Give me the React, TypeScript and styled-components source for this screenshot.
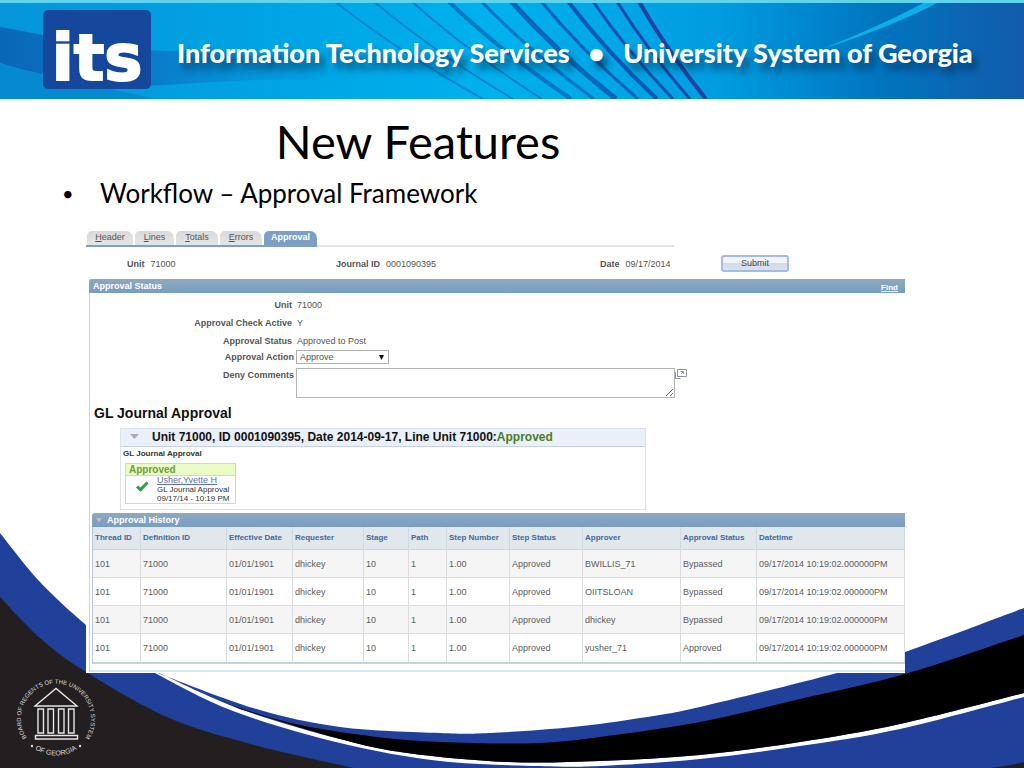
import React from "react";
import styled, { createGlobalStyle } from "styled-components";

const GlobalStyle = createGlobalStyle`
  *, *::before, *::after { box-sizing: border-box; }
  body { margin: 0; background: #fff; }
`;

const sans = `"Liberation Sans", Arial, sans-serif`;
const display = `Lato, Calibri, sans-serif`;

type Point = [number, number];

/* Smooth curve through a list of points. */
const curve = (points: Point[], command = "M") => {
  let d = `${command}${points[0][0]} ${points[0][1]}`;
  for (let i = 0; i < points.length - 1; i++) {
    const a = points[i - 1] ?? points[i];
    const b = points[i];
    const c = points[i + 1];
    const e = points[i + 2] ?? c;
    d += ` C${b[0] + (c[0] - a[0]) / 6} ${b[1] + (c[1] - a[1]) / 6} ${c[0] - (e[0] - b[0]) / 6} ${c[1] - (e[1] - b[1]) / 6} ${c[0]} ${c[1]}`;
  }
  return d;
};

/* ---------- Slide ---------- */

const Slide = styled.div`
  display: grid;
  grid-template-columns: minmax(0, 1fr);
  min-height: 100vh;
  overflow: hidden;
  background: #fff;
`;

const Waves = styled.svg`
  grid-area: 1 / 1;
  align-self: end;
  display: block;
  width: 100%;
  height: 240px;
`;

const Seal = styled.svg`
  grid-area: 1 / 1;
  align-self: end;
  display: block;
  width: 84px;
  height: 84px;
  margin: 0 0 8px 14px;
`;

const Content = styled.main`
  grid-area: 1 / 1;
  align-self: start;
`;

/* ---------- Banner ---------- */

const Banner = styled.header`
  display: grid;
  grid-template-columns: minmax(0, 1fr);
  height: 99px;
`;

const BannerArt = styled.svg`
  grid-area: 1 / 1;
  display: block;
  width: 100%;
  height: 99px;
`;

const BannerRow = styled.div`
  grid-area: 1 / 1;
  z-index: 1;
  display: flex;
  align-items: center;
  gap: 26px;
  height: 99px;
  padding-left: 43px;
`;

const Logo = styled.svg`
  flex: none;
  width: 108px;
  height: 79px;
`;

const BannerText = styled.p`
  display: flex;
  gap: 19px;
  margin: 0;
  padding-top: 6px;
  color: #fff;
  font: 900 27px/32px ${display};
  white-space: nowrap;
  text-shadow: 5px 7px 7px rgba(0, 50, 90, 0.75);
`;

/* ---------- Headings ---------- */

const Title = styled.h1`
  margin: 14px 188px 0 0;
  color: #000;
  font: 400 47px/56px ${display};
  text-align: center;
`;

const Bullets = styled.ul`
  margin: 8px 0 0;
  padding: 0 0 0 62px;
  list-style: none;
`;

const Bullet = styled.li`
  display: flex;
  color: #000;
  font: 400 26px/32px ${display};

  &::before {
    content: "•";
    width: 38px;
    font-size: 20px;
  }
`;

/* ---------- Application capture ---------- */

const Capture = styled.section`
  margin: 18px 119px 0 86px;
  padding: 4px 0 1px;
  background: #fff;
  color: #555;
  font: 9px/12px ${sans};
`;

const Tabs = styled.nav`
  display: flex;
  width: 588px;
  height: 16px;
  border-bottom: 2px solid #dfe4f4;
`;

const TabGroup = styled.div`
  display: flex;
  gap: 2px;
  height: 16px;
  padding-left: 1px;
  border-bottom: 2px solid #7ba0c4;
`;

const Tab = styled.a<{ $active?: boolean; $width: number }>`
  width: ${(p) => p.$width}px;
  height: 14px;
  border-radius: 5px 7px 0 0;
  background: ${(p) => (p.$active ? "#7ba0c4" : "linear-gradient(#d9d9d9, #e6e6e6)")};
  color: ${(p) => (p.$active ? "#fff" : "#555")};
  font-weight: ${(p) => (p.$active ? 700 : 400)};
  line-height: 13px;
  text-align: center;
  text-decoration: none;
`;

const KeyFields = styled.div`
  display: grid;
  grid-template-columns: 209px 264px 121px auto;
  align-items: center;
  justify-content: start;
  height: 32px;
  padding-left: 41px;
`;

const Field = styled.span`
  display: flex;
  gap: 6px;
  padding-top: 2px;
`;

const SubmitButton = styled.button`
  width: 68px;
  height: 17px;
  padding: 0 0 1px;
  border: 2px solid #a3bbe8;
  border-radius: 3px;
  background: linear-gradient(#f3f5fa 45%, #d3dae8 50%, #dce2ee);
  color: #444;
  font: 9px/12px ${sans};
`;

const Panel = styled.div`
  margin-left: 3px;
  border-left: 1px solid #c5d3e2;
  border-bottom: 2px solid #dae5ef;
  padding-bottom: 6px;
`;

const Bar = styled.div<{ $inset?: boolean }>`
  display: flex;
  align-items: center;
  justify-content: space-between;
  height: 14px;
  margin-left: ${(p) => (p.$inset ? 0 : -1)}px;
  padding: 0 7px 0 4px;
  border-radius: 3px 0 0 0;
  background: linear-gradient(#8ea9bd, #789dc4);
  color: #fff;
`;

const BarTitle = styled.h2`
  display: flex;
  align-items: center;
  gap: 5px;
  margin: 0;
  font: 700 9px/12px ${sans};
`;

const FindLink = styled.a`
  padding-top: 4px;
  color: #fff;
  font: 700 8px/10px ${sans};
`;

const Form = styled.form`
  display: grid;
  grid-template-columns: 204px 1fr;
  grid-template-rows: 18px 18px 16px 18px 32px;
  column-gap: 2px;
  padding-top: 3px;
`;

const Label = styled.label`
  font-weight: 700;
  line-height: 18px;
  text-align: right;
`;

const ReadLabel = styled.span`
  padding-right: 2px;
  font-weight: 700;
  line-height: 18px;
  text-align: right;
`;

const ReadValue = styled.output`
  padding-left: 1px;
  line-height: 18px;
`;

const SelectBox = styled.div`
  display: grid;
  align-self: center;
  width: 93px;
`;

const Select = styled.select`
  grid-area: 1 / 1;
  width: 100%;
  height: 14px;
  padding: 0 3px;
  border: 1px solid #b0b0b0;
  border-radius: 0;
  appearance: none;
  background: #fff;
  color: #555;
  font: 9px/12px ${sans};
`;

const SelectArrow = styled.svg`
  grid-area: 1 / 1;
  place-self: center end;
  width: 5px;
  height: 5px;
  margin-right: 5px;
  pointer-events: none;
`;

const CommentRow = styled.div`
  display: flex;
  align-items: flex-start;
  padding-top: 2px;
`;

const Comments = styled.textarea`
  display: block;
  width: 379px;
  height: 30px;
  border: 1px solid #b4b4b4;
  resize: both;
  background: #fff;
  font: 9px/12px ${sans};
`;

const IconButton = styled.button`
  display: flex;
  padding: 1px 0 0;
  border: 0;
  background: none;
`;

const SectionTitle = styled.h2`
  margin: 6px 0 6px 4px;
  color: #111;
  font: 700 14px/18px ${sans};
`;

const Flow = styled.section`
  width: 526px;
  height: 82px;
  margin: 0 0 3px 30px;
  border: 1px solid #dbe2ec;
`;

const FlowHeader = styled.h3`
  display: flex;
  align-items: center;
  height: 18px;
  margin: 0;
  padding: 0 0 2px 9px;
  border-bottom: 1px solid #c5d1e2;
  background: #eaf0f8;
  color: #111;
  font: 700 12px/16px ${sans};
  white-space: nowrap;

  svg {
    margin-right: 13px;
  }
`;

const Green = styled.span`
  color: #4b7a26;
`;

const FlowLabel = styled.p`
  margin: 1px 0 3px 2px;
  color: #333;
  font: 700 8px/12px ${sans};
`;

const Card = styled.article`
  width: 111px;
  height: 41px;
  margin-left: 4px;
  border: 1px solid #cbe39a;
`;

const CardTitle = styled.h4`
  margin: 0;
  padding-left: 3px;
  border-bottom: 1px solid #cbe39a;
  background: #e9fcc5;
  color: #6f9c3a;
  font: 700 10px/11px ${sans};
`;

const CardBody = styled.div`
  display: grid;
  grid-template-columns: 31px 1fr;
  color: #333;
  font: 8px/9px ${sans};
  white-space: nowrap;

  svg {
    margin: 5px 0 0 9px;
  }
`;

const CardLines = styled.div`
  display: flex;
  flex-direction: column;
`;

const UserLink = styled.a`
  color: #5b72a8;
  font-size: 9px;
`;

const History = styled.section`
  margin-left: 2px;
`;

const Table = styled.table`
  width: 100%;
  border-collapse: separate;
  border-spacing: 0;
  border-left: 1px solid #b5c7d8;
  border-bottom: 2px solid #c3d3e3;
  table-layout: fixed;

  tbody tr:nth-child(odd) {
    background: #f5f5f5;
  }
`;

const Th = styled.th`
  height: 23px;
  padding: 0 0 0 2px;
  border-right: 1px solid #d0d9e0;
  border-bottom: 1px solid #c9d4dc;
  background: #e1e8ec;
  color: #41679c;
  font: 700 8px/12px ${sans};
  text-align: left;
  white-space: nowrap;
`;

const Td = styled.td`
  height: 28px;
  padding: 0 0 0 2px;
  border-right: 1px solid #dcdcdc;
  border-bottom: 1px solid #dcdcdc;
  color: #5c5c5c;
  font: 9px/12px ${sans};
  white-space: nowrap;

  tr:last-child > & {
    border-bottom: 0;
  }
`;

/* ---------- Data ---------- */

const tabs = [
  { name: "Header", width: 46 },
  { name: "Lines", width: 39 },
  { name: "Totals", width: 42 },
  { name: "Errors", width: 42 },
];

const columns = [
  { name: "Thread ID", width: 48 },
  { name: "Definition ID", width: 86 },
  { name: "Effective Date", width: 66 },
  { name: "Requester", width: 71 },
  { name: "Stage", width: 45 },
  { name: "Path", width: 38 },
  { name: "Step Number", width: 63 },
  { name: "Step Status", width: 73 },
  { name: "Approver", width: 98 },
  { name: "Approval Status", width: 76 },
  { name: "Datetime" },
];

const history = [
  ["BWILLIS_71", "Bypassed"],
  ["OIITSLOAN", "Bypassed"],
  ["dhickey", "Bypassed"],
  ["yusher_71", "Approved"],
].map(([approver, status]) => [
  "101", "71000", "01/01/1901", "dhickey", "10", "1", "1.00", "Approved",
  approver, status, "09/17/2014 10:19:02.000000PM",
]);

const rays: { from: number; to: number; width: number; color: string }[] = [
  { from: 333, to: 483, width: 2, color: "#0086c8" },
  { from: 372, to: 513, width: 2, color: "#0086c8" },
  { from: 410, to: 542, width: 2, color: "#0080c6" },
  { from: 447, to: 571, width: 4, color: "#0078c2" },
  { from: 480, to: 594, width: 3, color: "#0074c2" },
  { from: 510, to: 616, width: 5, color: "#0a66b8" },
  { from: 540, to: 638, width: 3, color: "#0a62b8" },
  { from: 567, to: 657, width: 4, color: "#1058b2" },
  { from: 592, to: 673, width: 3, color: "#1450ac" },
  { from: 616, to: 690, width: 3, color: "#1c48a6" },
  { from: 638, to: 706, width: 4, color: "#2440a0" },
];

/* ---------- Wave outlines ---------- */

const leftOuter: Point[] = [[0, 533], [40, 582], [86, 625], [120, 651], [155, 673], [233, 711], [340, 743], [440, 761], [540, 766], [600, 766], [700, 759], [800, 746], [900, 729], [1024, 697]];
const leftInner: Point[] = [[0, 597], [40, 638], [86, 672], [167, 717], [247, 743], [340, 765], [360, 769]];
const topBlue: Point[] = [[155, 672], [253, 708], [340, 727], [440, 733], [490, 733], [573, 727], [640, 718], [700, 707], [837, 673], [905, 652], [1024, 608]];
const topBlack: Point[] = [[215, 698], [240, 708], [287, 722], [340, 732], [407, 740], [473, 743], [540, 743], [600, 737], [700, 722], [800, 699], [905, 674], [1024, 635]];
const whiteTop: Point[] = [[159, 673], [240, 709], [340, 739], [407, 753], [507, 762], [600, 761], [700, 755], [800, 742], [900, 724], [1024, 693]];
const whiteTopBack = [...whiteTop].reverse();

function BannerArtwork() {
  return (
    <BannerArt viewBox="0 0 1024 99" preserveAspectRatio="none" aria-hidden="true">
      <defs>
        <linearGradient id="sky">
          <stop offset="0" stopColor="#0595d9" />
          <stop offset="0.3" stopColor="#00a6e6" />
          <stop offset="0.48" stopColor="#00b1ee" />
          <stop offset="0.7" stopColor="#009de0" />
          <stop offset="0.86" stopColor="#0075bf" />
          <stop offset="1" stopColor="#135bab" />
        </linearGradient>
        <linearGradient id="swell">
          <stop offset="0" stopColor="#0a67b8" />
          <stop offset="0.4" stopColor="#0a78c6" />
          <stop offset="1" stopColor="#0a8fd2" stopOpacity="0" />
        </linearGradient>
      </defs>
      <path d="M0 0H1024V99H0Z" fill="url(#sky)" />
      <path d="M0 27C60 38 130 52 180 51C250 51 310 62 350 82C280 75 200 84 140 86C90 86 40 75 0 63Z" fill="url(#swell)" />
      <path d="M0 64C50 76 100 86 155 99H0Z" fill="#0789d0" />
      {rays.map((r) => (
        <path
          key={r.from}
          d={`M${r.from} 0Q${r.from + (r.to - r.from) * 0.44} 52 ${r.to} 99`}
          fill="none"
          stroke={r.color}
          strokeWidth={r.width}
        />
      ))}
      <path d="M822 49Q885 24 929 0H943Q890 28 822 49Z" fill="#0cb0e8" />
      <path d="M0 0H1024V3H0Z" fill="#5fd3ee" />
    </BannerArt>
  );
}

function WaveArtwork() {
  return (
    <Waves viewBox="0 528 1024 240" preserveAspectRatio="none" aria-hidden="true">
      <path d={`${curve(topBlue)} ${curve(whiteTopBack, "L")}Z`} fill="#20409a" />
      <path d={`${curve(topBlack)} ${curve(whiteTopBack.slice(0, -1), "L")}Z`} fill="#000" />
      <path d={`${curve(leftOuter)} V768H0Z`} fill="#20409a" />
      <path d={`${curve(leftInner)} H0Z`} fill="#231f20" />
      <path d="M990 768Q1008 766 1024 762V768Z" fill="#231f20" />
    </Waves>
  );
}

function RegentsSeal() {
  return (
    <Seal viewBox="14 676 84 84" role="img" aria-label="Board of Regents seal">
      <defs>
        <path id="ring" d="M30.7 742.8A35 35 0 1 1 81.3 742.8" />
        <path id="ringFoot" d="M27 742A38 38 0 0 0 85 742" />
      </defs>
      <g fill="#dcdcdc" fontFamily="Liberation Sans, Arial, sans-serif">
        <text textAnchor="middle" fontSize="6">
          <textPath href="#ring" startOffset="50%">BOARD OF REGENTS OF THE UNIVERSITY SYSTEM</textPath>
        </text>
        <text textAnchor="middle" fontSize="7">
          <textPath href="#ringFoot" startOffset="50%">OF GEORGIA</textPath>
        </text>
        <circle cx="32" cy="746" r="1.2" />
        <circle cx="80" cy="746" r="1.2" />
      </g>
      <g fill="none" stroke="#e6e6e6" strokeWidth="1.4">
        <path d="M35 706L56 688.500L77 706Z" />
        <path d="M38 709h5.500v24h-5.500zM48 709h5.500v24h-5.500zM58.500 709h5.500v24h-5.500zM68.500 709h5.500v24h-5.500zM35.500 735.500h42v3.500h-42z" />
      </g>
    </Seal>
  );
}

export default function App() {
  return (
    <Slide>
      <GlobalStyle />
      <WaveArtwork />
      <RegentsSeal />
      <Content>
        <Banner>
          <BannerArtwork />
          <BannerRow>
            <Logo viewBox="0 0 108 79" role="img" aria-label="its">
              <rect width="108" height="79" rx="5" fill="#15479c" />
              <text x="54" y="70" textAnchor="middle" fill="#fff" stroke="#fff" strokeWidth="2" fontFamily="DejaVu Sans, sans-serif" fontWeight="700" fontSize="64">
                its
              </text>
            </Logo>
            <BannerText>
              <span>Information Technology Services</span>
              <span>•</span>
              <span>University System of Georgia</span>
            </BannerText>
          </BannerRow>
        </Banner>

        <Title>New Features</Title>
        <Bullets>
          <Bullet>Workflow – Approval Framework</Bullet>
        </Bullets>

        <Capture>
          <Tabs>
            <TabGroup>
              {tabs.map((t) => (
                <Tab key={t.name} href="#" $width={t.width}>
                  <u>{t.name[0]}</u>
                  {t.name.slice(1)}
                </Tab>
              ))}
              <Tab href="#" $active $width={53}>Approval</Tab>
            </TabGroup>
          </Tabs>

          <KeyFields>
            <Field><b>Unit</b> 71000</Field>
            <Field><b>Journal ID</b> 0001090395</Field>
            <Field><b>Date</b> 09/17/2014</Field>
            <SubmitButton type="submit" form="approval">Submit</SubmitButton>
          </KeyFields>

          <Panel>
            <Bar>
              <BarTitle>Approval Status</BarTitle>
              <FindLink href="#">Find</FindLink>
            </Bar>
            <Form id="approval">
              <ReadLabel>Unit</ReadLabel>
              <ReadValue>71000</ReadValue>
              <ReadLabel>Approval Check Active</ReadLabel>
              <ReadValue>Y</ReadValue>
              <ReadLabel>Approval Status</ReadLabel>
              <ReadValue>Approved to Post</ReadValue>
              <Label htmlFor="action">Approval Action</Label>
              <SelectBox>
                <Select id="action" defaultValue="Approve">
                  <option>Approve</option>
                </Select>
                <SelectArrow viewBox="0 0 5 5" aria-hidden="true">
                  <path d="M0 0H5L2.500 5Z" fill="#111" />
                </SelectArrow>
              </SelectBox>
              <Label htmlFor="comments">Deny Comments</Label>
              <CommentRow>
                <Comments id="comments" />
                <IconButton type="button" aria-label="Open comments in a window">
                  <svg width="12" height="10" viewBox="0 0 12 10" fill="none" stroke="#8d949c">
                    <path d="M2.500 .5h9v7h-9zM.5 3.500v6h5M5.500 2.500h3v2.500M8.500 2.500L6 5" />
                  </svg>
                </IconButton>
              </CommentRow>
            </Form>

            <SectionTitle>GL Journal Approval</SectionTitle>
            <Flow>
              <FlowHeader>
                <svg width="9" height="5" viewBox="0 0 9 5" aria-hidden="true">
                  <path d="M0 0H9L4.500 5Z" fill="#a9adb3" />
                </svg>
                Unit 71000, ID 0001090395, Date 2014-09-17, Line Unit 71000:
                <Green>Approved</Green>
              </FlowHeader>
              <FlowLabel>GL Journal Approval</FlowLabel>
              <Card>
                <CardTitle>Approved</CardTitle>
                <CardBody>
                  <svg width="14" height="11" viewBox="0 0 14 11" aria-hidden="true">
                    <path d="M1 6.500L3 4.500L5.500 6.500L11.500 .5L13.500 2.500L6 10.500H5Z" fill="#2f9e45" />
                  </svg>
                  <CardLines>
                    <UserLink href="#">Usher,Yvette H</UserLink>
                    <span>GL Journal Approval</span>
                    <span>09/17/14 - 10:19 PM</span>
                  </CardLines>
                </CardBody>
              </Card>
            </Flow>

            <History>
              <Bar $inset>
                <BarTitle>
                  <svg width="6" height="4" viewBox="0 0 6 4" aria-hidden="true">
                    <path d="M0 0H6L3 4Z" fill="#c5c2ae" />
                  </svg>
                  Approval History
                </BarTitle>
              </Bar>
              <Table>
                <colgroup>
                  {columns.map((c) => (
                    <col key={c.name} width={c.width} />
                  ))}
                </colgroup>
                <thead>
                  <tr>
                    {columns.map((c) => (
                      <Th key={c.name} scope="col">{c.name}</Th>
                    ))}
                  </tr>
                </thead>
                <tbody>
                  {history.map((row) => (
                    <tr key={row[8]}>
                      {row.map((value, i) => (
                        <Td key={columns[i].name}>{value}</Td>
                      ))}
                    </tr>
                  ))}
                </tbody>
              </Table>
            </History>
          </Panel>
        </Capture>
      </Content>
    </Slide>
  );
}
